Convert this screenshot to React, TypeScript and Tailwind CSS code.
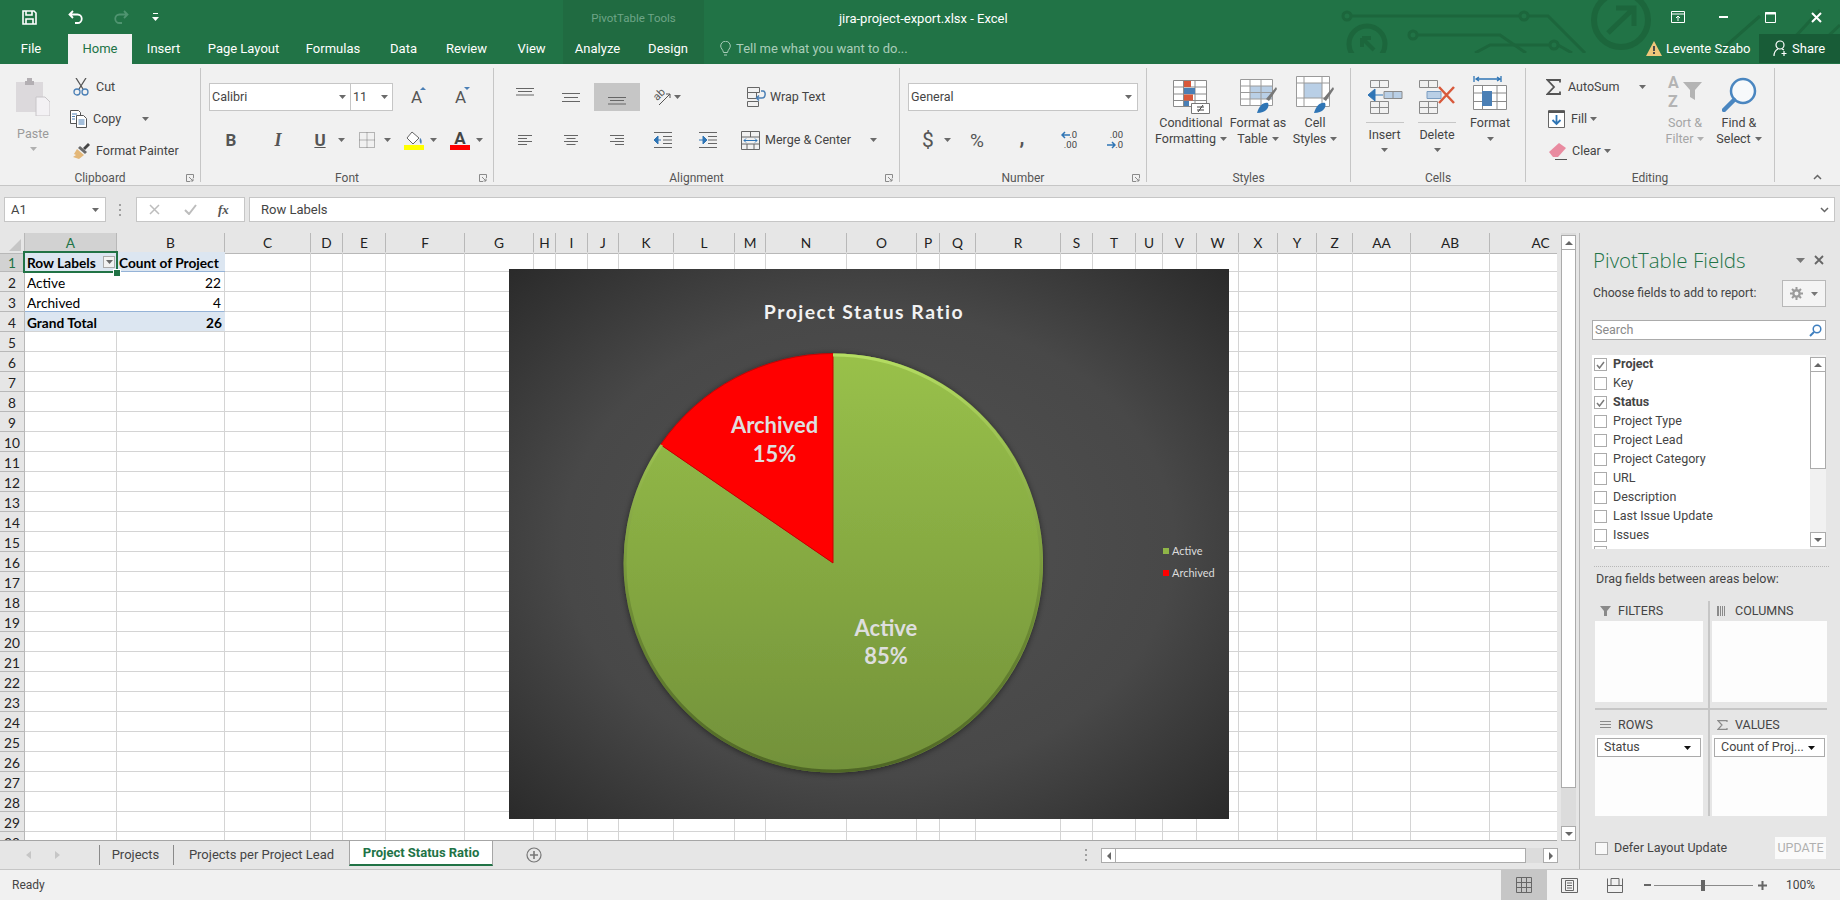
import type { ReactNode } from "react";

const UI = "font-['Roboto',sans-serif]";
const SHEET = "font-['Lato',sans-serif]";

const COLUMNS = ["A", "B", "C", "D", "E", "F", "G", "H", "I", "J", "K", "L", "M", "N", "O", "P", "Q", "R", "S", "T", "U", "V", "W", "X", "Y", "Z", "AA", "AB", "AC"];
const COLS_CLASS =
  "grid grid-cols-[25px_92px_108px_86px_32px_43px_79px_69px_22px_32px_31px_55px_61px_31px_81px_70px_23px_36px_85px_32px_43px_27px_34px_42px_39px_39px_36px_58px_79px_102px]";
const ROWS = Array.from({ length: 30 }, (_, i) => i + 1);

const FIELDS = [
  { name: "Project", on: true },
  { name: "Key", on: false },
  { name: "Status", on: true },
  { name: "Project Type", on: false },
  { name: "Project Lead", on: false },
  { name: "Project Category", on: false },
  { name: "URL", on: false },
  { name: "Description", on: false },
  { name: "Last Issue Update", on: false },
  { name: "Issues", on: false },
];

const TABS = [
  { label: "File", w: "w-[68px] pr-[6px]" },
  { label: "Home", w: "w-[64px]" },
  { label: "Insert", w: "w-[63px]" },
  { label: "Page Layout", w: "w-[97px]" },
  { label: "Formulas", w: "w-[82px]" },
  { label: "Data", w: "w-[59px]" },
  { label: "Review", w: "w-[67px]" },
  { label: "View", w: "w-[63px]" },
];

function Caret({ className = "ml-0", color = "#6a6a6a" }: { className?: string; color?: string }) {
  return (
    <svg width="7" height="4" viewBox="0 0 7 4" className={`shrink-0 ${className}`}>
      <path d="M0 0h7L3.5 4z" fill={color} />
    </svg>
  );
}

function Launcher() {
  return (
    <svg width="8" height="8" viewBox="0 0 8 8" className="absolute right-[6px] top-[4px]" fill="none" stroke="#8a8a8a">
      <path d="M7.5 4V.5H.5v7H4" />
      <path d="M3 3l4 4M7 4.5V7H4.5" />
    </svg>
  );
}

function Group({ w, label, launcher, children }: { w: string; label: string; launcher?: boolean; children: ReactNode }) {
  return (
    <div className={`${w} h-[114px] shrink-0 flex flex-col border-r border-[#c6c6c6]`}>
      <div className="h-[102px] shrink-0">{children}</div>
      <div className="relative h-[16px] shrink-0 text-center text-[12px] leading-[16px] text-[#555]">
        {label}
        {launcher && <Launcher />}
      </div>
    </div>
  );
}

function LargeButton({
  w,
  icon,
  lines,
  caretInline,
  caretBelow,
  dim,
}: {
  w: string;
  icon: ReactNode;
  lines: string[];
  caretInline?: boolean;
  caretBelow?: boolean;
  dim?: boolean;
}) {
  return (
    <div className={`${w} shrink-0 flex flex-col items-center ${dim ? "text-[#a5a5a5]" : "text-[#444]"}`}>
      <div className="h-[47px] flex items-end justify-center">{icon}</div>
      {lines.map((line, i) => (
        <div key={line} className="h-4 flex items-center text-[12.5px] leading-4 whitespace-nowrap">
          {line}
          {caretInline && i === lines.length - 1 && <Caret className="ml-1" color={dim ? "#b0b0b0" : "#6a6a6a"} />}
        </div>
      ))}
      {caretBelow && <Caret className="mt-[6px]" />}
    </div>
  );
}

function Lines({ d, h = 28 }: { d: string; h?: number }) {
  return (
    <svg width="18" height={h} viewBox={`0 0 18 ${h}`} className="shrink-0" fill="none" stroke="#666" strokeWidth="1.1">
      <path d={d} />
    </svg>
  );
}

function TitleBar() {
  return (
    <div className="relative h-16 bg-[#217346] text-white shrink-0 overflow-hidden">
      <svg width="500" height="53" viewBox="0 0 500 53" className="absolute left-[1340px] top-0" fill="none" stroke="#1c663c" strokeWidth="3">
        <circle cx="7" cy="16" r="4" />
        <path d="M11 16H180M188 16h20L245 53" />
        <circle cx="184" cy="16" r="4" />
        <circle cx="27" cy="44" r="18" strokeWidth="5" />
        <path d="M22 38l12 12M22 38v9M22 38h9" strokeWidth="4" />
        <circle cx="73" cy="35" r="4" />
        <path d="M77 35H160L186 53" />
        <circle cx="214" cy="45" r="4" />
        <path d="M210 45H150L135 53M218 45L232 53" />
        <circle cx="281" cy="20" r="27" strokeWidth="6" />
        <path d="M268 33L294 8M276 8h18v18" strokeWidth="5" />
        <path d="M378 53L420 16M440 53L480 10M470 53L500 25" />
      </svg>

      {/* pivot tools band */}
      <div className="absolute left-[563px] top-0 h-16 w-[141px] bg-[#206b41]" />

      <div className="relative h-[34px] flex items-center">
        <svg width="15" height="15" viewBox="0 0 15 15" className="ml-[22px]" fill="none" stroke="#fff" strokeWidth="1.6">
          <path d="M1 1h11l2 2v11H1z" />
          <path d="M4 1v4h6V1M4 14V9h7v5" />
        </svg>
        <svg width="15" height="14" viewBox="0 0 15 14" className="ml-[31px]" fill="none" stroke="#fff" strokeWidth="1.8">
          <path d="M5 1L1.5 4.5 5 8M2 4.5h7.5a3.7 3.7 0 0 1 0 8.5H7" />
        </svg>
        <svg width="15" height="14" viewBox="0 0 15 14" className="ml-[31px]" fill="none" stroke="#4f9470" strokeWidth="1.8">
          <path d="M10 1l3.5 3.5L10 8M13 4.5H5.5a3.7 3.7 0 0 0 0 8.5H8" />
        </svg>
        <svg width="7" height="9" viewBox="0 0 7 9" className="ml-[23px]" fill="#fff">
          <path d="M1 0h5v1H1zM0 4h7L3.5 8z" />
        </svg>
        <div className="ml-[404px] mt-1 w-[141px] text-center text-[11.5px] text-[#6ea587]">PivotTable Tools</div>
        <div className="ml-[135px] mt-1 w-[149px] text-[13px] whitespace-nowrap">jira-project-export.xlsx - Excel</div>
        <svg width="14" height="12" viewBox="0 0 14 12" className="ml-[683px]" fill="none" stroke="#fff">
          <path d="M.5.5h13v11H.5zM.5 3h13M7 10V5M5 7l2-2 2 2" />
        </svg>
        <div className="ml-[34px] h-[2px] w-[9px] bg-white" />
        <svg width="11" height="11" viewBox="0 0 11 11" className="ml-[37px]" fill="none" stroke="#fff">
          <path d="M.5.5h10v10H.5z" />
          <path d="M0 1.500h11" strokeWidth="2" />
        </svg>
        <svg width="11" height="11" viewBox="0 0 11 11" className="ml-[35px]" fill="none" stroke="#fff" strokeWidth="2">
          <path d="M1 1l9 9M10 1l-9 9" />
        </svg>
      </div>

      <div className="relative h-[30px] flex">
        {TABS.map((tab) => (
          <div
            key={tab.label}
            className={`${tab.w} flex items-center justify-center text-[13px] ${tab.label === "Home" ? "bg-[#f1f1f1] text-[#217346]" : ""}`}
          >
            {tab.label}
          </div>
        ))}
        <div className="w-[69px] flex items-center justify-center text-[13px]">Analyze</div>
        <div className="w-[72px] flex items-center justify-center text-[13px]">Design</div>
        <svg width="11" height="16" viewBox="0 0 11 16" className="ml-[16px] mt-[7px]" fill="none" stroke="#a9cdb9">
          <path d="M3.5 11.5C3 8.5.7 7.5.7 5a4.8 4.8 0 0 1 9.6 0c0 2.500-2.300 3.500-2.800 6.500zM4 14h3" />
        </svg>
        <div className="ml-[5px] w-[175px] flex items-center text-[13px] text-[#a9cdb9] whitespace-nowrap">Tell me what you want to do...</div>
        <svg width="16" height="15" viewBox="0 0 16 15" className="ml-[735px] mt-[7px]">
          <path d="M8 0l8 15H0z" fill="#efc67a" />
          <path d="M7 5h2v5H7zM7 11h2v2H7z" fill="#4b4b4b" />
        </svg>
        <div className="ml-[4px] w-[93px] flex items-center text-[13px] whitespace-nowrap">Levente Szabo</div>
        <div className="w-[81px] h-[29px] bg-[#185c37] flex items-center">
          <svg width="15" height="17" viewBox="0 0 15 17" className="ml-[14px]" fill="none" stroke="#fff" strokeWidth="1.2">
            <circle cx="7" cy="5" r="4" />
            <path d="M1 16c0-4 2-6 4-7M9 9l2 1M11 11v5M8.500 13.500h5" />
          </svg>
          <span className="ml-1 text-[13px]">Share</span>
        </div>
      </div>
    </div>
  );
}

function Clipboard() {
  return (
    <Group w="w-[201px]" label="Clipboard" launcher>
      <div className="flex h-full">
        <div className="ml-1 w-[58px] flex flex-col items-center text-[#9a9a9a]">
          <svg width="34" height="38" viewBox="0 0 34 38" className="mt-[10px]">
            <path d="M0 4h27v30H0z" fill="#dcd9dc" />
            <path d="M9 3h2V0h5v3h2v4H9z" fill="#b3afb3" />
            <path d="M20 19h9l5 5v14H20z" fill="#f3f1f4" stroke="#c8c5c8" />
          </svg>
          <div className="mt-[10px] h-4 text-[12.5px] leading-4">Paste</div>
          <Caret className="mt-[5px]" color="#b0b0b0" />
        </div>
        <div className="pt-[3px] text-[12.5px] text-[#444]">
          <div className="h-8 flex items-center">
            <svg width="16" height="18" viewBox="0 0 16 18" className="ml-[11px]" fill="none">
              <path d="M3 0l7 11M13 0L6 11" stroke="#555" strokeWidth="1.3" />
              <circle cx="4" cy="14" r="3" stroke="#4a7fb5" strokeWidth="1.300" />
              <circle cx="12" cy="14" r="3" stroke="#4a7fb5" strokeWidth="1.300" />
            </svg>
            <span className="ml-[7px]">Cut</span>
          </div>
          <div className="h-8 flex items-center">
            <svg width="17" height="18" viewBox="0 0 17 18" className="ml-[8px]" fill="none" stroke="#555">
              <path d="M.5.5h8l2 2v11H.5z" fill="#fff" />
              <path d="M6.500 5.500h7l3 3v9h-10z" fill="#fff" />
              <path d="M2 4h5M2 6.500h3M2 9h3M8.500 10h6M8.500 12h6M8.500 14h6" stroke="#4a7fb5" />
            </svg>
            <span className="ml-[6px] w-[28px]">Copy</span>
            <Caret className="ml-[21px]" />
          </div>
          <div className="h-8 flex items-center">
            <svg width="17" height="16" viewBox="0 0 17 16" className="ml-[11px]">
              <path d="M10 5l5-5 2 2-5 5z" fill="#444" />
              <path d="M7 3l7 6-2 2-7-6z" fill="#6a6a6a" />
              <path d="M4 6l7 6-5 4-6-2 3-2-2-1z" fill="#e3b778" />
            </svg>
            <span className="ml-[6px] whitespace-nowrap">Format Painter</span>
          </div>
        </div>
      </div>
    </Group>
  );
}

function FontGroup() {
  return (
    <Group w="w-[293px]" label="Font" launcher>
      <div className="pt-[15px]">
        <div className="h-7 flex items-center">
          <div className="ml-2 w-[142px] h-7 bg-white border border-[#c6c6c6] flex items-center text-[12.5px] pl-[2px] text-[#444]">
            <span className="flex-1">Calibri</span>
            <Caret className="mr-[4px]" />
          </div>
          <div className="w-[42px] h-7 bg-white border border-l-0 border-[#c6c6c6] flex items-center text-[12.5px] pl-[2px] text-[#444]">
            <span className="flex-1">11</span>
            <Caret className="mr-[4px]" />
          </div>
          <div className="relative ml-[18px] text-[17px] leading-none text-[#555]">
            A
            <svg width="6" height="3" viewBox="0 0 6 3" className="absolute -top-[2px] left-[9px]"><path d="M0 3h6L3 0z" fill="#4a7fb5" /></svg>
          </div>
          <div className="relative ml-[33px] text-[17px] leading-none text-[#555]">
            A
            <svg width="6" height="3" viewBox="0 0 6 3" className="absolute -top-[2px] left-[9px]"><path d="M0 0h6L3 3z" fill="#4a7fb5" /></svg>
          </div>
        </div>
        <div className="mt-[15px] h-7 flex items-center text-[#555]">
          <span className="ml-[23px] w-[14px] text-center text-[17px] font-bold leading-none">B</span>
          <span className="ml-[33px] w-[14px] text-center text-[18px] font-bold italic leading-none font-['Liberation_Serif',serif]">I</span>
          <span className="ml-[28px] w-[14px] text-center text-[17px] font-bold leading-none underline">U</span>
          <Caret className="ml-[11px]" />
          <svg width="16" height="16" viewBox="0 0 16 16" className="ml-[14px]" fill="none" stroke="#777" strokeDasharray="1 1">
            <path d="M.5.5h15v15H.5zM8 .5v15M.5 8h15" />
          </svg>
          <Caret className="ml-[9px]" />
          <div className="ml-[13px] w-5 flex flex-col items-center">
            <svg width="18" height="14" viewBox="0 0 18 14" fill="none">
              <path d="M7 1L2 7l6 6 6-6z" fill="#fff" stroke="#666" />
              <path d="M15 7c2 1 2 5 1 6-1-1-2-3-1-6z" fill="#4a7fb5" />
            </svg>
            <div className="h-[5px] w-5 bg-[#ffff00]" />
          </div>
          <Caret className="ml-[6px]" />
          <div className="ml-[13px] w-5 flex flex-col items-center">
            <span className="text-[17px] font-bold leading-[14px] text-[#444]">A</span>
            <div className="h-[5px] w-5 bg-[#ff0000]" />
          </div>
          <Caret className="ml-[6px]" />
        </div>
      </div>
    </Group>
  );
}

function Alignment() {
  return (
    <Group w="w-[406px]" label="Alignment" launcher>
      <div className="pt-[15px] text-[12.5px] text-[#444]">
        <div className="h-7 flex items-center">
          <div className="ml-[22px]"><Lines d="M0 5.500h18M2 8.500h14M0 12h18" /></div>
          <div className="ml-[28px]"><Lines d="M0 10.500h18M2 14.500h14M0 18.500h18" /></div>
          <div className="ml-[14px] w-[46px] h-7 bg-[#c6c6c6] flex items-center justify-center"><Lines d="M0 14.500h18M2 17.500h14M0 21h18" /></div>
          <div className="relative ml-[13px] w-[18px] h-[18px]">
            <span className="absolute left-0 top-[1px] -rotate-45 text-[11px] leading-none text-[#555]">ab</span>
            <svg width="18" height="18" viewBox="0 0 18 18" className="absolute left-0 top-0" fill="none" stroke="#555">
              <path d="M6 17L17 6M13 6h4v4" />
            </svg>
          </div>
          <Caret className="ml-[3px]" />
          <svg width="19" height="20" viewBox="0 0 19 20" className="ml-[66px]" fill="none" stroke="#666">
            <path d="M.5.5h12v5H.5zM.5 5.500h9v6H.5zM.5 14.500h11v5H.5z" />
            <path d="M14 4h2c3 0 3 7-1 7h-5M12 8.500L9.500 11l2.500 2.500" stroke="#4a7fb5" strokeWidth="1.500" />
          </svg>
          <span className="ml-[4px] mt-px whitespace-nowrap">Wrap Text</span>
        </div>
        <div className="mt-[15px] h-7 flex items-center">
          <div className="ml-[22px]"><Lines d="M2 9.500h14M2 12.500h9M2 15.500h14M2 18.500h9" /></div>
          <div className="ml-[28px]"><Lines d="M2 9.500h14M4.500 12.500h9M2 15.500h14M4.500 18.500h9" /></div>
          <div className="ml-[28px]"><Lines d="M2 9.500h14M7 12.500h9M2 15.500h14M7 18.500h9" /></div>
          <svg width="18" height="16" viewBox="0 0 18 16" className="ml-[28px]" fill="none" stroke="#666">
            <path d="M0 .5h18M9 4.500h9M9 8h9M9 11.500h9M0 15.500h18" />
            <path d="M0 8h7M4 4L0 8l4 4z" stroke="#2f75b5" fill="#2f75b5" />
          </svg>
          <svg width="18" height="16" viewBox="0 0 18 16" className="ml-[27px]" fill="none" stroke="#666">
            <path d="M0 .5h18M9 4.500h9M9 8h9M9 11.500h9M0 15.500h18" />
            <path d="M0 8h7M4 4l4 4-4 4z" stroke="#2f75b5" fill="#2f75b5" />
          </svg>
          <svg width="19" height="19" viewBox="0 0 19 19" className="ml-[24px]" fill="none" stroke="#666">
            <path d="M.5.5h18v18H.5zM.5 6h18M.5 13h18M9.500 .5V6M6 13v5.500M13 13v5.500" />
            <path d="M3 9.500h13M5 7.500l-2 2 2 2M14 7.500l2 2-2 2" stroke="#2f75b5" />
          </svg>
          <span className="ml-[5px] mt-px w-[105px] whitespace-nowrap">Merge &amp; Center</span>
          <Caret />
        </div>
      </div>
    </Group>
  );
}

function DecimalIcon({ top, bottom, arrowTop, dir }: { top: string; bottom: string; arrowTop: boolean; dir: "l" | "r" }) {
  const arrow = dir === "l" ? "M1 4h8M4 1L1 4l3 3" : "M0 4h8M5 1l3 3-3 3";
  return (
    <div className="relative w-4 h-[20px] text-[9.5px] leading-[10px] text-right text-[#444]">
      <div>{top}</div>
      <div>{bottom}</div>
      <svg width="9" height="8" viewBox="0 0 9 8" className={`absolute left-0 ${arrowTop ? "top-[1px]" : "top-[11px]"}`} fill="none" stroke="#2f75b5" strokeWidth="1.500">
        <path d={arrow} />
      </svg>
    </div>
  );
}

function NumberGroup() {
  return (
    <Group w="w-[247px]" label="Number" launcher>
      <div className="pt-[15px]">
        <div className="ml-2 w-[230px] h-7 bg-white border border-[#c6c6c6] flex items-center pl-[2px] text-[12.5px] text-[#444]">
          <span className="flex-1">General</span>
          <Caret className="mr-[5px]" />
        </div>
        <div className="mt-[15px] h-7 flex items-center text-[#555]">
          <span className="ml-[22px] w-[10px] text-center text-[21px] leading-none">$</span>
          <Caret className="ml-[12px]" />
          <span className="ml-[18px] w-4 text-center text-[19px] leading-none">%</span>
          <span className="ml-[34px] w-[6px] text-center text-[20px] font-bold leading-none -mt-[6px]">,</span>
          <div className="ml-[36px]"><DecimalIcon top=".0" bottom=".00" arrowTop dir="l" /></div>
          <div className="ml-[30px]"><DecimalIcon top=".00" bottom=".0" arrowTop={false} dir="r" /></div>
        </div>
      </div>
    </Group>
  );
}

function Styles() {
  return (
    <Group w="w-[204px]" label="Styles">
      <div className="flex ml-[10px]">
        <LargeButton
          w="w-[68px]"
          caretInline
          lines={["Conditional", "Formatting"]}
          icon={
            <svg width="37" height="34" viewBox="0 0 37 34" fill="none" stroke="#8a8a8a" className="mb-[1px]">
              <path d="M.5.5h33v26H.5zM.5 7h33M.5 14h33M.5 20.500h33M10.500 .5v26M22 .5v26" fill="#fff" />
              <path d="M11 1h7v6h-7z" fill="#d8593b" stroke="none" />
              <path d="M11 8h11v6H11z" fill="#4a7fb5" stroke="none" />
              <path d="M11 14.500h9v6h-9z" fill="#d8593b" stroke="none" />
              <path d="M11 21h5v5h-5z" fill="#4a7fb5" stroke="none" />
              <path d="M18.500 23.500h18v10h-18z" fill="#fff" stroke="#777" />
              <path d="M24 27h7M24 30h7M30 25l-5 7" stroke="#444" />
            </svg>
          }
        />
        <LargeButton
          w="w-[66px]"
          caretInline
          lines={["Format as", "Table"]}
          icon={
            <svg width="37" height="35" viewBox="0 0 37 35" fill="none" stroke="#9a9a9a" className="mb-[1px]">
              <path d="M.5.5h32v26H.5z" fill="#fff" />
              <path d="M10 7h22v13H10z" fill="#b9cfe6" stroke="none" />
              <path d="M.5 7h32M.5 13.500h32M.5 20h32M10 .5v26M21 .5v26" />
              <path d="M26 20L36 8l1 2-8 12z" fill="#777" stroke="none" />
              <path d="M17 34c2-7 6-11 11-10 2 4-2 10-11 10z" fill="#2f75b5" stroke="none" />
            </svg>
          }
        />
        <LargeButton
          w="w-[48px]"
          caretInline
          lines={["Cell", "Styles"]}
          icon={
            <svg width="38" height="38" viewBox="0 0 38 38" fill="none" stroke="#9a9a9a" className="mb-[1px]">
              <path d="M.5.5h33v30H.5z" fill="#fff" />
              <path d="M8 7h18v15H8z" fill="#b9cfe6" stroke="none" />
              <path d="M.5 7h33M.5 22h33M8 .5v30M26 .5v30" />
              <path d="M27 23L37 11l1 2-8 12z" fill="#777" stroke="none" />
              <path d="M18 37c2-7 6-11 11-10 2 4-2 10-11 10z" fill="#2f75b5" stroke="none" />
            </svg>
          }
        />
      </div>
    </Group>
  );
}

function CellButton({ w, label, icon }: { w: string; label: string; icon: ReactNode }) {
  return (
    <div className={`${w} shrink-0 flex flex-col items-center text-[12.5px] text-[#444]`}>
      <div className="h-[46px] flex items-end">{icon}</div>
      <div className="mt-2 h-px w-[38px] bg-[#c6c6c6]" />
      <div className="mt-[4px] h-4 leading-4">{label}</div>
      <Caret className="mt-[5px]" />
    </div>
  );
}

function Cells() {
  return (
    <Group w="w-[175px]" label="Cells">
      <div className="flex ml-[7px]">
        <CellButton
          w="w-[53px]"
          label="Insert"
          icon={
            <svg width="36" height="34" viewBox="0 0 36 34" fill="none" stroke="#8a8a8a">
              <path d="M3.500 .5h18v7h-18zM12.500 .5v7M3.500 21.500h18v12h-18zM3.500 27.500h18M12.500 21.500v12" />
              <path d="M17 11.500h18v7H17zM26 11.500v7" fill="#b9cfe6" />
              <path d="M16 15H3M8 9l-7 6 7 6z" stroke="#2f75b5" fill="#2f75b5" />
            </svg>
          }
        />
        <CellButton
          w="w-[52px]"
          label="Delete"
          icon={
            <svg width="36" height="34" viewBox="0 0 36 34" fill="none" stroke="#8a8a8a">
              <path d="M.5.5h18v7H.5zM9.500 .5v7M.5 21.500h18v12H.5zM.5 27.500h18M9.500 21.500v12" />
              <path d="M8 11.500h14v7H8z" fill="#b9cfe6" stroke="#7a9cc0" />
              <path d="M20 7l15 16M35 7L20 23" stroke="#d8593b" strokeWidth="2.500" />
            </svg>
          }
        />
        <LargeButton
          w="w-[54px]"
          caretBelow
          lines={["Format"]}
          icon={
            <svg width="34" height="38" viewBox="0 0 34 38" fill="none" stroke="#8a8a8a" className="mb-[1px]">
              <path d="M1 0v6M28 0v6M3 3h24M6 1L3 3l3 2M24 1l3 2-3 2" stroke="#2f75b5" strokeWidth="1.300" />
              <path d="M.5 9.500h33v24H.5zM.5 17h33M.5 25.500h33M9.500 9.500v24M24 9.500v24" fill="#fff" />
              <path d="M9 15h10v15H9z" fill="#4a7fb5" stroke="none" />
            </svg>
          }
        />
      </div>
    </Group>
  );
}

function Editing() {
  return (
    <Group w="w-[249px]" label="Editing">
      <div className="flex">
        <div className="w-[124px] pt-[3px] text-[12.5px] text-[#444]">
          <div className="h-8 flex items-center">
            <svg width="15" height="16" viewBox="0 0 15 16" className="ml-[20px]" fill="none" stroke="#555" strokeWidth="1.800">
              <path d="M14 3.500V1H1.500L8 8l-6.500 7H14v-2.500" />
            </svg>
            <span className="ml-[7px] w-[71px]">AutoSum</span>
            <Caret />
          </div>
          <div className="h-8 flex items-center">
            <svg width="17" height="18" viewBox="0 0 17 18" className="ml-[22px]" fill="none" stroke="#666">
              <path d="M.5.5h16v17H.5z" fill="#fff" />
              <path d="M0 1h17v2H0z" fill="#555" stroke="none" />
              <path d="M8.500 5v9M4.500 10l4 4 4-4" stroke="#2f75b5" strokeWidth="1.800" />
            </svg>
            <span className="ml-[6px]">Fill</span>
            <Caret className="ml-[3px]" />
          </div>
          <div className="h-8 flex items-center">
            <svg width="18" height="17" viewBox="0 0 18 17" className="ml-[23px]">
              <path d="M0 9L10 0l7 5-8 9H4z" fill="#e98ba0" />
              <path d="M6 16.500h12" stroke="#555" />
            </svg>
            <span className="ml-[5px]">Clear</span>
            <Caret className="ml-[3px]" />
          </div>
        </div>
        <LargeButton
          w="w-[70px]"
          dim
          caretInline
          lines={["Sort &", "Filter"]}
          icon={
            <div className="relative w-[34px] h-[36px] mb-[5px] text-[16px] font-bold text-[#b4b4b4]">
              <div className="h-[17px] leading-[17px]">A</div>
              <div className="mt-[2px] h-[17px] leading-[17px]">Z</div>
              <svg width="19" height="18" viewBox="0 0 19 18" className="absolute right-0 top-[8px]">
                <path d="M0 0h19l-7 8v10l-5-3V8z" fill="#b4b4b4" />
              </svg>
            </div>
          }
        />
        <LargeButton
          w="w-[38px]"
          caretInline
          lines={["Find &", "Select"]}
          icon={
            <svg width="35" height="35" viewBox="0 0 35 35" fill="none" className="mb-[3px]">
              <circle cx="21" cy="14" r="12" stroke="#4a86c0" strokeWidth="2.500" fill="#f7f9fb" />
              <path d="M12 23L2 33" stroke="#4a86c0" strokeWidth="4.500" strokeLinecap="round" />
            </svg>
          }
        />
      </div>
    </Group>
  );
}

function Ribbon() {
  return (
    <div className="relative h-[122px] shrink-0 bg-[#f1f1f1] border-b border-[#c6c6c6] pt-1 flex">
      <Clipboard />
      <FontGroup />
      <Alignment />
      <NumberGroup />
      <Styles />
      <Cells />
      <Editing />
      <svg width="9" height="6" viewBox="0 0 9 6" className="absolute left-[1813px] top-[110px]" fill="none" stroke="#666" strokeWidth="1.500">
        <path d="M1 5l3.500-3.500L8 5" />
      </svg>
    </div>
  );
}

function FormulaBar() {
  return (
    <div className="h-[47px] shrink-0 bg-[#e6e6e6] pt-[11px] flex items-start text-[13px] text-[#444]">
      <div className="ml-1 w-[102px] h-[25px] bg-white border border-[#c6c6c6] flex items-center px-[6px]">
        <span className="flex-1 mt-px">A1</span>
        <Caret />
      </div>
      <div className="ml-[13px] mt-[7px] flex flex-col gap-[3px]">
        <div className="size-[2px] bg-[#a0a0a0]" />
        <div className="size-[2px] bg-[#a0a0a0]" />
        <div className="size-[2px] bg-[#a0a0a0]" />
      </div>
      <div className="ml-[15px] w-[109px] h-[25px] bg-white border border-[#c6c6c6] flex items-center">
        <svg width="11" height="11" viewBox="0 0 11 11" className="ml-[12px]" fill="none" stroke="#bdbdbd" strokeWidth="1.500"><path d="M1 1l9 9M10 1l-9 9" /></svg>
        <svg width="13" height="11" viewBox="0 0 13 11" className="ml-[24px]" fill="none" stroke="#bdbdbd" strokeWidth="2"><path d="M1 6l4 4 7-9" /></svg>
        <span className="ml-[21px] text-[13px] italic font-bold font-['Liberation_Serif',serif] text-[#555]">fx</span>
      </div>
      <div className="ml-1 w-[1586px] h-[25px] bg-white border border-[#c6c6c6] flex items-center pl-[11px]">
        <span className="flex-1 mt-px">Row Labels</span>
        <svg width="9" height="6" viewBox="0 0 9 6" className="mr-[5px]" fill="none" stroke="#666" strokeWidth="1.500"><path d="M1 1l3.500 3.500L8 1" /></svg>
      </div>
    </div>
  );
}

function SheetCell({ row, col }: { row: number; col: number }) {
  const isHeader = row === 1 && col < 2;
  const isTotal = row === 4 && col < 2;
  const bg = isHeader || isTotal ? "bg-[#dce6f1]" : "";
  const border = row === 1 && col < 2 ? "border-b border-b-[#95b3d7]" : row === 3 && col < 2 ? "border-b border-b-[#95b3d7]" : "border-b border-b-[#d4d4d4]";
  const right = (row === 2 || row === 3) && col === 0 ? "" : isHeader || isTotal ? "" : "border-r border-r-[#d4d4d4]";

  let content: ReactNode = null;
  if (col === 0) {
    if (row === 1) content = <span className="font-bold pl-[2px]">Row Labels</span>;
    if (row === 2) content = <span className="pl-[2px]">Active</span>;
    if (row === 3) content = <span className="pl-[2px]">Archived</span>;
    if (row === 4) content = <span className="font-bold pl-[2px]">Grand Total</span>;
  }
  if (col === 1) {
    if (row === 1) content = <span className="font-bold pl-[2px] whitespace-nowrap">Count of Project</span>;
    if (row === 2) content = <span className="block text-right pr-[3px]">22</span>;
    if (row === 3) content = <span className="block text-right pr-[3px]">4</span>;
    if (row === 4) content = <span className="block text-right pr-[3px] font-bold">26</span>;
  }
  return <div className={`h-5 leading-[22px] text-[13.7px] text-black ${bg} ${border} ${right}`}>{content}</div>;
}

function Chart() {
  return (
    <div className="absolute left-[509px] top-9 w-[720px] h-[550px] bg-[radial-gradient(ellipse_at_center,#525252_0%,#484848_60%,#2a2a2a_100%)]">
      <svg width="720" height="550" viewBox="0 0 720 550" className={SHEET}>
        <defs>
          <linearGradient id="activeFill" x1="0" y1="0" x2="0" y2="1">
            <stop offset="0" stopColor="#99c14a" />
            <stop offset="1" stopColor="#72913a" />
          </linearGradient>
          <linearGradient id="edge" x1="0" y1="0" x2="0" y2="1">
            <stop offset="0" stopColor="#b5dd63" />
            <stop offset="0.6" stopColor="#6f8e36" />
            <stop offset="1" stopColor="#4f6626" />
          </linearGradient>
          <filter id="pieShadow" x="-10%" y="-10%" width="120%" height="120%">
            <feDropShadow dx="0" dy="1" stdDeviation="3" floodColor="#000" floodOpacity="0.5" />
          </filter>
        </defs>
        <g filter="url(#pieShadow)">
          <path d="M324 294L324 84.500A209.500 209.500 0 1 1 151.600 175.700Z" fill="url(#activeFill)" />
          <path d="M324 294L151.600 175.700A209.500 209.500 0 0 1 324 84.500Z" fill="#ff0000" stroke="#c80000" />
          <path d="M324 86A208 208 0 1 1 152.800 176" fill="none" stroke="url(#edge)" strokeWidth="3" />
        </g>
        <g textAnchor="middle" className="fill-[#dedede] text-[22px] font-bold">
          <text x="265.500" y="164">Archived</text>
          <text x="265.500" y="193">15%</text>
          <text x="377" y="367">Active</text>
          <text x="377" y="395">85%</text>
        </g>
        <text x="355" y="50" textAnchor="middle" className="fill-[#f2f2f2] text-[19.400px] font-bold tracking-[1.500px]">Project Status Ratio</text>
        <rect x="654" y="279" width="6" height="6" fill="#8fb547" />
        <rect x="654" y="301" width="6" height="6" fill="#ff0000" />
        <g className="fill-[#dcdcdc] text-[11px]">
          <text x="663" y="286">Active</text>
          <text x="663" y="308">Archived</text>
        </g>
      </svg>
    </div>
  );
}

function ScrollBtn({ dir }: { dir: "up" | "down" }) {
  return (
    <div className="h-[15px] bg-white border border-[#ababab] flex items-center justify-center shrink-0">
      <svg width="8" height="4" viewBox="0 0 8 4"><path d={dir === "up" ? "M0 4h8L4 0z" : "M0 0h8L4 4z"} fill="#666" /></svg>
    </div>
  );
}

function Sheet() {
  return (
    <div className="relative w-[1557px] h-[608px] overflow-hidden bg-white border-b border-b-[#a6a6a6]">
      <div className={`${COLS_CLASS} h-[19px] ${SHEET} text-[13.7px] text-[#222]`}>
        <div className="relative bg-[#e6e6e6] border-r border-b border-[#b8b8b8]">
          <svg width="12" height="12" viewBox="0 0 12 12" className="absolute right-[3px] bottom-[2px]"><path d="M12 0v12H0z" fill="#c6c6c6" /></svg>
        </div>
        {COLUMNS.map((col, i) => (
          <div
            key={col}
            className={`border-r border-b border-[#b8b8b8] text-center leading-[20px] ${i === 0 ? "bg-[#d2d2d2] text-[#217346]" : "bg-[#e6e6e6]"}`}
          >
            {col}
          </div>
        ))}
      </div>
      {ROWS.map((row) => (
        <div key={row} className={`${COLS_CLASS} ${SHEET}`}>
          <div
            className={`h-5 text-center leading-[22px] text-[13.7px] border-r border-b border-[#b8b8b8] ${row === 1 ? "bg-[#d2d2d2] text-[#217346]" : "bg-[#e6e6e6] text-[#222]"}`}
          >
            {row}
          </div>
          {COLUMNS.map((col, i) => (
            <SheetCell key={col} row={row} col={i} />
          ))}
        </div>
      ))}

      {/* selected cell + autofilter */}
      <div className="absolute left-[23px] top-[18px] w-[95px] h-[22px] border-2 border-[#217346]">
        <div className="absolute right-[1px] top-[3px] w-3 h-3 bg-[#f2f2f2] border border-[#ababab] flex items-center justify-center">
          <Caret className="ml-0" />
        </div>
      </div>
      <div className="absolute left-[114px] top-[37px] size-[6px] bg-[#217346] border border-white box-content -m-px" />

      <Chart />
    </div>
  );
}

function SheetTabs() {
  return (
    <div className="h-[28px] flex items-start bg-[#e6e6e6] text-[13px] text-[#444]">
      <svg width="5" height="8" viewBox="0 0 5 8" className="ml-[26px] mt-[10px]"><path d="M5 0v8L0 4z" fill="#c6c6c6" /></svg>
      <svg width="5" height="8" viewBox="0 0 5 8" className="ml-[24px] mt-[10px]"><path d="M0 0v8l5-4z" fill="#c6c6c6" /></svg>
      <div className="ml-[39px] mt-[4px] h-5 flex items-center border-l border-[#8a8a8a] w-[74px] justify-center pr-[2px]">Projects</div>
      <div className="mt-[4px] h-5 flex items-center border-l border-[#8a8a8a] w-[176px] justify-center whitespace-nowrap">Projects per Project Lead</div>
      <div className="h-[25px] w-[144px] flex items-center justify-center bg-white border-x border-[#a6a6a6] border-b-2 border-b-[#217346] font-bold text-[#217346] whitespace-nowrap">
        Project Status Ratio
      </div>
      <svg width="16" height="16" viewBox="0 0 16 16" className="ml-[33px] mt-[6px]" fill="none" stroke="#777" strokeWidth="1.200">
        <circle cx="8" cy="8" r="7" />
        <path d="M8 4v8M4 8h8" strokeWidth="1.600" />
      </svg>
      <div className="ml-[543px] mt-[8px] flex flex-col gap-[3px]">
        <div className="size-[2px] bg-[#a0a0a0]" />
        <div className="size-[2px] bg-[#a0a0a0]" />
        <div className="size-[2px] bg-[#a0a0a0]" />
      </div>
      <div className="ml-[14px] mt-[7px] h-[15px] w-[457px] flex">
        <div className="w-[15px] bg-white border border-[#ababab] flex items-center justify-center">
          <svg width="4" height="8" viewBox="0 0 4 8"><path d="M4 0v8L0 4z" fill="#666" /></svg>
        </div>
        <div className="w-[410px] bg-white border-y border-r border-[#ababab]" />
        <div className="w-[17px] bg-[#dcdcdc]" />
        <div className="w-[15px] bg-white border border-[#ababab] flex items-center justify-center">
          <svg width="4" height="8" viewBox="0 0 4 8"><path d="M0 0v8l4-4z" fill="#666" /></svg>
        </div>
      </div>
    </div>
  );
}

function FieldRow({ name, on }: { name: string; on: boolean }) {
  return (
    <div className="h-[19px] flex items-center text-[12.5px] text-[#444]">
      <div className="ml-[2px] size-[13px] shrink-0 bg-white border border-[#ababab] flex items-center justify-center">
        {on && (
          <svg width="9" height="8" viewBox="0 0 9 8" fill="none" stroke="#7a7a7a" strokeWidth="1.500"><path d="M1 4l2.500 3L8 1" /></svg>
        )}
      </div>
      <span className={`ml-[6px] ${on ? "font-bold" : ""}`}>{name}</span>
    </div>
  );
}

function AreaHeader({ icon, label }: { icon: ReactNode; label: string }) {
  return (
    <div className="w-full h-5 flex items-center text-[12.5px] text-[#444]">
      <div className="w-[18px] ml-[5px] shrink-0">{icon}</div>
      <span>{label}</span>
    </div>
  );
}

function FieldChip({ label }: { label: string }) {
  return (
    <div className="mx-[2px] mt-[3px] h-[19px] bg-white border border-[#ababab] flex items-center pl-[6px] pr-[9px] text-[12.5px] text-[#444]">
      <span className="flex-1 whitespace-nowrap">{label}</span>
      <Caret color="#111" />
    </div>
  );
}

function FieldsPanel() {
  return (
    <div className="w-[261px] h-[636px] shrink-0 border-l border-[#b8b8b8] bg-[#e6e6e6] pt-[15px]">
      <div className="h-[24px] flex items-center">
        <span className="ml-[13px] w-[203px] text-[20.5px] font-light leading-none text-[#217346] whitespace-nowrap font-['Open_Sans',sans-serif]">PivotTable Fields</span>
        <svg width="9" height="5" viewBox="0 0 9 5"><path d="M0 0h9L4.500 5z" fill="#777" /></svg>
        <svg width="10" height="10" viewBox="0 0 10 10" className="ml-[9px]" fill="none" stroke="#666" strokeWidth="1.800"><path d="M1 1l8 8M9 1l-8 8" /></svg>
      </div>
      <div className="mt-[8px] h-[27px] flex items-center">
        <span className="ml-[13px] w-[190px] text-[12.2px] text-[#444] whitespace-nowrap">Choose fields to add to report:</span>
        <div className="ml-[-1px] w-[44px] h-[27px] bg-[#f4f4f4] border border-[#b8b8b8] flex items-center justify-center gap-[8px]">
          <svg width="13" height="13" viewBox="0 0 13 13" fill="none" stroke="#9a9a9a">
            <circle cx="6.500" cy="6.500" r="3.200" strokeWidth="2.400" />
            <path d="M6.500 0v2.500M6.500 10.500V13M0 6.500h2.500M10.500 6.500H13M2 2l1.800 1.800M9.200 9.200L11 11M11 2L9.200 3.800M3.800 9.200L2 11" strokeWidth="2" />
          </svg>
          <Caret color="#777" />
        </div>
      </div>
      <div className="ml-[12px] mt-[13px] w-[234px] h-5 bg-white border border-[#ababab] flex items-center pl-[2px] text-[12.5px] text-[#8a8a8a]">
        <span className="flex-1">Search</span>
        <svg width="13" height="13" viewBox="0 0 13 13" className="mr-[3px]" fill="none" stroke="#3f7fbf" strokeWidth="1.500">
          <circle cx="8" cy="5" r="3.800" />
          <path d="M5 8l-4 4" strokeWidth="2" />
        </svg>
      </div>
      <div className="ml-[12px] mt-[15px] w-[234px] h-[194px] bg-white flex overflow-hidden">
        <div className="flex-1">
          {FIELDS.map((f) => (
            <FieldRow key={f.name} name={f.name} on={f.on} />
          ))}
          <div className="ml-[2px] mt-[1px] size-[13px] border border-[#ababab]" />
        </div>
        <div className="w-[16px] bg-[#f1f1f1] flex flex-col py-[2px]">
          <ScrollBtn dir="up" />
          <div className="h-[97px] bg-white border-x border-b border-[#ababab]" />
          <div className="flex-1" />
          <ScrollBtn dir="down" />
        </div>
      </div>
      <div className="ml-[14px] mt-[17px] w-[235px] border-t border-dotted border-[#b8b8b8]" />
      <div className="ml-[16px] mt-[3px] h-[18px] text-[12.5px] leading-[18px] text-[#444] whitespace-nowrap">Drag fields between areas below:</div>

      <div className="ml-[15px] mt-[13px] w-[232px] grid grid-cols-[115px_117px]">
        <div className="border-r-2 border-[#c6c6c6] pr-[5px] pb-[6px] border-b-2">
          <AreaHeader
            label="FILTERS"
            icon={<svg width="11" height="10" viewBox="0 0 11 10"><path d="M0 0h11L7 5v5H4V5z" fill="#8a8a8a" /></svg>}
          />
          <div className="h-[81px] bg-[#fdfdfd]" />
        </div>
        <div className="pl-[2px] pb-[6px] border-b-2 border-[#c6c6c6]">
          <AreaHeader
            label="COLUMNS"
            icon={<svg width="9" height="10" viewBox="0 0 9 10"><path d="M0 0h2v10H0zM3 0h1v10H3zM5 0h1v10H5zM7 0h1v10H7z" fill="#8a8a8a" /></svg>}
          />
          <div className="h-[81px] bg-[#fdfdfd]" />
        </div>
        <div className="border-r-2 border-[#c6c6c6] pr-[5px] pt-[5px]">
          <AreaHeader
            label="ROWS"
            icon={<svg width="11" height="8" viewBox="0 0 11 8"><path d="M0 0h11v1H0zM0 3h11v1H0zM0 6h11v1H0z" fill="#8a8a8a" /></svg>}
          />
          <div className="h-[81px] bg-[#fdfdfd] overflow-hidden">
            <FieldChip label="Status" />
          </div>
        </div>
        <div className="pl-[2px] pt-[5px]">
          <AreaHeader
            label="VALUES"
            icon={
              <svg width="11" height="10" viewBox="0 0 11 10" fill="none" stroke="#8a8a8a" strokeWidth="1.200">
                <path d="M10 2V.7H1L5 5 1 9.300h9V8" />
              </svg>
            }
          />
          <div className="h-[81px] bg-[#fdfdfd] overflow-hidden">
            <FieldChip label="Count of Proj..." />
          </div>
        </div>
      </div>

      <div className="ml-[15px] mt-[21px] h-[22px] flex items-center">
        <div className="size-[13px] bg-[#f8f8f8] border border-[#ababab]" />
        <span className="ml-[6px] w-[161px] text-[12.5px] text-[#444] whitespace-nowrap">Defer Layout Update</span>
        <div className="w-[51px] h-[22px] bg-[#fafafa] flex items-center justify-center text-[12.5px] text-[#b0b0b0]">UPDATE</div>
      </div>
    </div>
  );
}

function StatusBar() {
  return (
    <div className="h-[31px] shrink-0 bg-[#f1f1f1] border-t border-[#c6c6c6] flex items-center text-[12px] text-[#444]">
      <span className="ml-3 w-[1489px]">Ready</span>
      <div className="w-[46px] h-[30px] bg-[#c6c6c6] flex items-center justify-center">
        <svg width="16" height="16" viewBox="0 0 16 16" fill="none" stroke="#666">
          <path d="M.5.5h15v15H.5zM.5 5.500h15M.5 10.500h15M5.500 .5v15M10.500 .5v15" />
        </svg>
      </div>
      <svg width="17" height="15" viewBox="0 0 17 15" className="ml-[14px]" fill="none" stroke="#666">
        <path d="M.5.5h16v14H.5zM4.500 2.500h8v10h-8zM6 5h5M6 7.500h5M6 10h5" />
      </svg>
      <svg width="16" height="15" viewBox="0 0 16 15" className="ml-[29px]" fill="none" stroke="#666">
        <path d="M.5.5v14h15V.5M.5 7.500h15M4 .5v7M12 .5v7M4 .5h8" />
      </svg>
      <div className="ml-[21px] h-[2px] w-[7px] bg-[#666]" />
      <div className="relative ml-[3px] w-[99px] h-px bg-[#8a8a8a]">
        <div className="absolute left-[47px] -top-[5px] w-1 h-[11px] bg-[#666]" />
      </div>
      <svg width="9" height="9" viewBox="0 0 9 9" className="ml-[5px]" fill="none" stroke="#666" strokeWidth="2">
        <path d="M4.500 0v9M0 4.500h9" />
      </svg>
      <span className="ml-[19px]">100%</span>
    </div>
  );
}

export default function App() {
  return (
    <div className={`w-[1840px] h-[900px] flex flex-col overflow-hidden bg-[#e6e6e6] ${UI}`}>
      <TitleBar />
      <Ribbon />
      <FormulaBar />
      <div className="flex h-[636px]">
        <div className="w-[1579px] shrink-0 flex flex-col">
          <div className="flex h-[608px]">
            <Sheet />
            <div className="w-[22px] flex">
              <div className="ml-[4px] w-[15px] h-[608px] pt-[2px] flex flex-col bg-[#dcdcdc]">
                <ScrollBtn dir="up" />
                <div className="h-[538px] bg-white border-x border-b border-[#ababab]" />
                <div className="flex-1" />
                <ScrollBtn dir="down" />
              </div>
            </div>
          </div>
          <SheetTabs />
        </div>
        <FieldsPanel />
      </div>
      <StatusBar />
    </div>
  );
}
